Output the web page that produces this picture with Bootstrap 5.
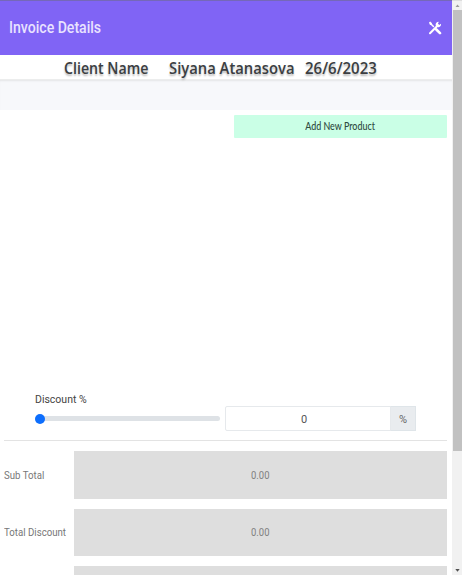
<!DOCTYPE html>
<html lang="en">
<head>
<meta charset="utf-8">
<meta name="viewport" content="width=device-width, initial-scale=1">
<title>Invoice Details</title>
<link href="https://cdn.jsdelivr.net/npm/bootstrap@5.3.0/dist/css/bootstrap.min.css" rel="stylesheet">
<style>
body{height:575px;overflow:hidden;font-family:Roboto,"Liberation Sans",sans-serif;font-size:10.5px;line-height:1;color:#444}
.screen{height:575px}
.topbar{height:55px;background:#8064f5;border-top:1px solid #7568b8;padding:0 10px 0 9px}
.fit{display:inline-block;white-space:nowrap;transform-origin:0 50%}
.brand{font-size:16px;color:#e9e2ff;font-weight:500;transform:scaleX(.88)}
.client{height:25px;font:600 15.5px/1 "Open Sans",sans-serif;color:#3b3e42;text-shadow:0 2px 2px #bbb;border-bottom:1px solid #eceded;padding:3px 0 0 64px}
.c1{width:105px}.c2{width:136px}
.c1 .fit{transform:scaleX(.915)}.c2 .fit{transform:scaleX(.955)}.c3 .fit{transform:scaleX(.97)}
.band{height:30px;background:#f7f8fb;box-shadow:inset 0 2px 2px -1px #e4e5e7}
.products{height:283px;padding:5px 5px 0 0}
.add-btn{width:213px;height:23px;background:#caffe6;color:#2e4a40;font:500 10.5px/1 Lato,sans-serif;border:0;border-radius:1px;padding:0}
.add-btn .fit{transform:scaleX(.85);transform-origin:50% 50%}
.discount{padding:2px 36px 0 35px;height:47px}
.label{height:11px;color:#444}
.slide{width:185px}
.slide.form-range{height:10px}
.slide::-webkit-slider-runnable-track{height:5px;background:#dee2e6}
.slide::-webkit-slider-thumb{width:10px;height:10px;margin-top:-2.5px}
.pct{width:191px;height:25px;margin-left:5px}
.pct .form-control{font-size:11px;color:#555;padding:3px 8px 0 0;border-color:#e6e9ec;border-radius:2px;min-height:0}
.pct .input-group-text{width:26px;font-size:11px;padding:3px 0 0;color:#666;background:#e9ecef;border-color:#dfe5e9;border-radius:0}
.totals{margin:0 5px 0 4px;border-top:1px solid #e3e3e3;padding-top:10px;gap:10px}
.total{height:47.5px;color:#777}
.name{width:69.5px;padding-top:2px}
.n1,.n2{transform:scaleX(.92)}
.amount{background:#dedede;color:#808080;padding-top:2px}
.amount .fit{transform:scaleX(.9);transform-origin:50% 50%}
.scroller{width:10px;background:#f1f1f1;border-top:1px solid #ddd;padding-left:1px}
.arrow{height:9px}
.thumb{height:441px;background:#c1c1c1}
</style>
<script src="https://cdn.jsdelivr.net/npm/bootstrap@5.3.0/dist/js/bootstrap.bundle.min.js"></script>
</head>
<body>
<div class="screen d-flex overflow-hidden">
  <main class="flex-grow-1 overflow-hidden bg-white">
    <header class="topbar d-flex align-items-center justify-content-between">
      <span class="fit brand">Invoice Details</span>
      <svg width="14" height="14" viewBox="0 0 14 14" fill="none" stroke="#fff" stroke-linecap="round"><path d="M2.5 2.5 5.5 5.5" stroke-width="1.5"/><path d="M1 1.4 2.2.6 4 2.3 3.4 3.8 2 4Z" fill="#fff" stroke="none"/><path d="M8.3 8.5 12 12.2" stroke-width="2.6"/><path d="M2 12.2 9.5 4.8" stroke-width="2"/><path d="M12.9 2.8A2.7 2.7 0 1 1 10.8.9L9.9 2.6 11.2 3.9Z" fill="#fff" stroke="none"/></svg>
    </header>
    <div class="client d-flex align-items-center">
      <div class="c1"><span class="fit">Client Name</span></div>
      <div class="c2"><span class="fit">Siyana Atanasova</span></div>
      <div class="c3"><span class="fit">26/6/2023</span></div>
    </div>
    <div class="band"></div>
    <section class="products d-flex justify-content-end align-items-start">
      <button class="btn add-btn" type="button"><span class="fit">Add New Product</span></button>
    </section>
    <section class="discount">
      <label class="label d-block" for="discount">Discount %</label>
      <div class="d-flex align-items-center">
        <input class="form-range slide" id="discount" type="range" min="0" max="100" value="0">
        <div class="input-group flex-nowrap pct">
          <input class="form-control text-center" type="text" value="0" aria-label="Discount percent">
          <span class="input-group-text justify-content-center">%</span>
        </div>
      </div>
    </section>
    <section class="totals d-flex flex-column">
      <div class="total d-flex align-items-center"><span class="name"><span class="fit n1">Sub Total</span></span><div class="amount flex-grow-1 h-100 d-flex align-items-center justify-content-center"><span class="fit">0.00</span></div></div>
      <div class="total d-flex align-items-center"><span class="name"><span class="fit n2">Total Discount</span></span><div class="amount flex-grow-1 h-100 d-flex align-items-center justify-content-center"><span class="fit">0.00</span></div></div>
      <div class="total d-flex"><span class="name"></span><div class="amount flex-grow-1 h-100"></div></div>
    </section>
  </main>
  <aside class="scroller flex-shrink-0 d-flex flex-column" aria-hidden="true">
    <svg class="arrow" width="9" viewBox="0 0 9 9"><path d="M2.5 6 4.5 3.5 6.5 6Z" fill="#999"/></svg>
    <div class="thumb"></div>
    <svg class="arrow mt-auto" width="9" viewBox="0 0 9 9"><path d="M2.3 3 4.5 5.7 6.7 3Z" fill="#505050"/></svg>
  </aside>
</div>
</body>
</html>
